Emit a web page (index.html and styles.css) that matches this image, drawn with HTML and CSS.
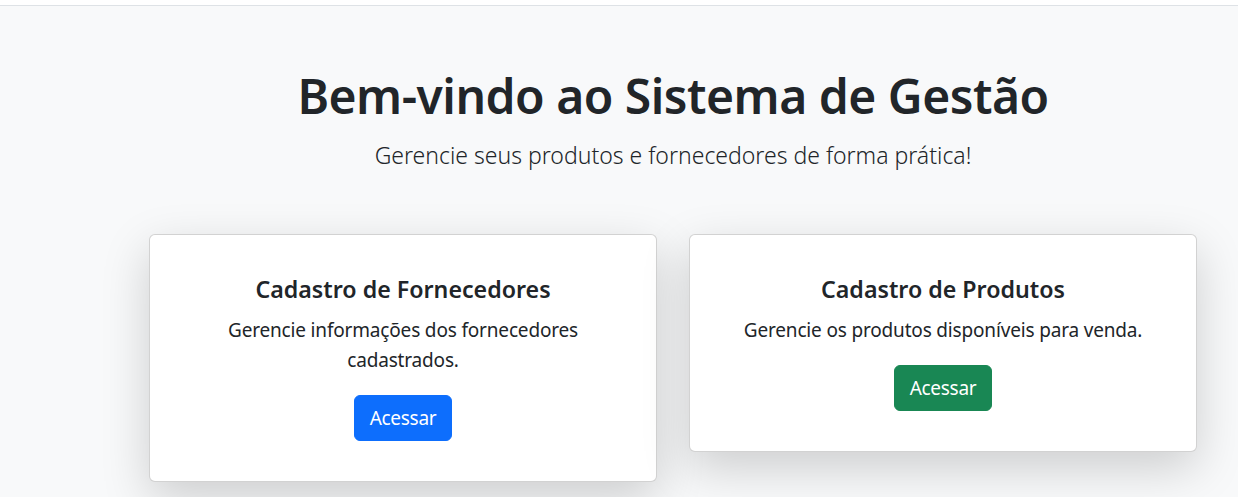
FILE: index.html
```html
<!DOCTYPE html>
<html lang="pt-BR">
<head>
<meta charset="utf-8">
<title>Sistema de Gestão</title>
<link rel="stylesheet" href="styles.css">
</head>
<body>
<div class="topbar"></div>
<main class="hero">
  <div class="container">
    <h1 class="hero-title">Bem-vindo ao Sistema de Gestão</h1>
    <p class="hero-lead">Gerencie seus produtos e fornecedores de forma prática!</p>
    <div class="cards">
      <div class="card">
        <h4 class="card-title">Cadastro de Fornecedores</h4>
        <p class="card-text">Gerencie informações dos fornecedores cadastrados.</p>
        <a class="btn btn-primary" href="#">Acessar</a>
      </div>
      <div class="card">
        <h4 class="card-title">Cadastro de Produtos</h4>
        <p class="card-text">Gerencie os produtos disponíveis para venda.</p>
        <a class="btn btn-success" href="#">Acessar</a>
      </div>
    </div>
  </div>
</main>
</body>
</html>
```
FILE: styles.css
```css
* { box-sizing: border-box; }
html, body { margin: 0; padding: 0; }
body {
  background: #f8f9fa;
  color: #212529;
  font-family: "Noto Sans", "Open Sans", sans-serif;
  height: 497px;
  overflow: hidden;
}
.topbar {
  height: 6px;
  background: #ffffff;
  border-bottom: 1px solid #dee2e6;
}
.hero {
  padding-top: 61px;
}
.container {
  width: 1048px;
  margin-left: 149px;
  display: flex;
  flex-direction: column;
  align-items: center;
}
.hero-title {
  margin: 0;
  font-size: 48px;
  font-weight: 600;
  line-height: 58px;
  letter-spacing: -0.5px;
  text-align: center;
}
.hero-lead {
  margin: 14px 0 0;
  font-size: 23px;
  font-weight: 300;
  line-height: 33px;
  text-align: center;
}
.cards {
  margin-top: 62px;
  width: 100%;
  display: flex;
  gap: 32px;
  align-items: flex-start;
}
.card {
  flex: 1 1 0;
  background: #ffffff;
  border: 1px solid rgba(0, 0, 0, 0.175);
  border-radius: 6px;
  box-shadow: 0 16px 48px rgba(0, 0, 0, 0.175);
  padding: 40px;
  display: flex;
  flex-direction: column;
  align-items: center;
  text-align: center;
}
.card-title {
  margin: 0 0 11px;
  font-size: 23.2px;
  font-weight: 600;
  line-height: 28.8px;
}
.card-text {
  margin: 0 0 20px;
  font-size: 19px;
  line-height: 30px;
  letter-spacing: -0.17px;
}
.btn {
  display: inline-block;
  padding: 7px 15px;
  font-size: 19px;
  line-height: 30px;
  letter-spacing: -0.3px;
  border-radius: 6px;
  border: 1px solid transparent;
  color: #ffffff;
  text-decoration: none;
}
.btn-primary { background: #0d6efd; border-color: #0d6efd; }
.btn-success { background: #198754; border-color: #198754; }
```
